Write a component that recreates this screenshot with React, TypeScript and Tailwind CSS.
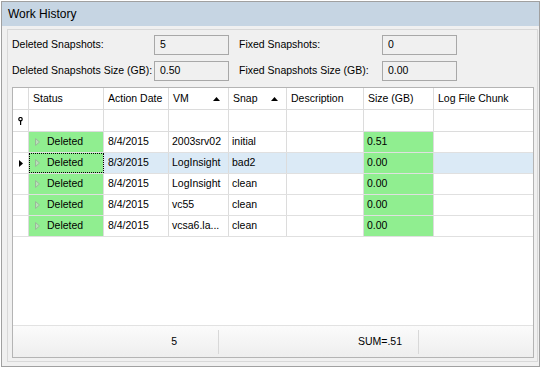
import { ReactNode } from 'react';

type Row = { date: string; vm: string; snap: string; size: string; selected?: boolean };

const rows: Row[] = [
  { date: '8/4/2015', vm: '2003srv02', snap: 'initial', size: '0.51' },
  { date: '8/3/2015', vm: 'LogInsight', snap: 'bad2', size: '0.00', selected: true },
  { date: '8/4/2015', vm: 'LogInsight', snap: 'clean', size: '0.00' },
  { date: '8/4/2015', vm: 'vc55', snap: 'clean', size: '0.00' },
  { date: '8/4/2015', vm: 'vcsa6.la...', snap: 'clean', size: '0.00' },
];

const cols = 'grid grid-cols-[16px_75px_65px_60px_58px_77px_70px_1fr]';

const SortUp = () => (
  <svg width="7" height="4" viewBox="0 0 7 4" className="shrink-0">
    <polygon points="3.5,0 7,4 0,4" fill="#000" />
  </svg>
);

const Expand = () => (
  <svg width="5" height="8" viewBox="0 0 5 8" className="shrink-0">
    <polygon points="0.5,0.5 4.5,4 0.5,7.5" fill="#b9dfb9" stroke="#9ab89a" strokeWidth="1" />
  </svg>
);

const Field = ({ label, value, labelW }: { label: string; value: string; labelW: string }) => (
  <div className="flex items-center">
    <span className={labelW}>{label}</span>
    <div className="w-[75px] h-[20px] border border-[#a8a8a8] bg-[#f0f0f0] pl-[5px] flex items-center">{value}</div>
  </div>
);

const Head = ({ children, sort }: { children?: ReactNode; sort?: boolean }) => (
  <div className="border-r border-[#dcdcdc] pl-[4px] pr-[8px] flex items-center justify-between overflow-hidden">
    <span>{children}</span>
    {sort && <SortUp />}
  </div>
);

export default function App() {
  return (
    <div className="w-[541px] h-[369px] bg-white pt-px px-px pb-[2px] font-['Liberation_Sans',Arial,sans-serif] text-[10.5px] text-black whitespace-nowrap">
      <div className="h-full border border-[#a0a0a0] bg-[#f0f0f0] flex flex-col">
        <div className="h-[24px] bg-[#c6d5e3] pl-[6px] flex items-center text-[12px]">Work History</div>
        <div className="flex-1 pt-[3px] pl-[5px] pr-[1px] pb-[4px] flex">
          <div className="flex-1 border border-[#d8d8d8] pl-[4px] pr-[3px] pt-[5px] pb-[3px] flex flex-col">
            <div className="flex flex-col gap-[6px]">
              <div className="flex gap-[10px]">
                <Field label="Deleted Snapshots:" value="5" labelW="w-[142px]" />
                <Field label="Fixed Snapshots:" value="0" labelW="w-[143px]" />
              </div>
              <div className="flex gap-[10px]">
                <Field label="Deleted Snapshots Size (GB):" value="0.50" labelW="w-[142px]" />
                <Field label="Fixed Snapshots Size (GB):" value="0.00" labelW="w-[143px]" />
              </div>
            </div>

            <div className="mt-[6px] flex-1 border border-[#b4b4b4] bg-white flex flex-col">
              {/* header */}
              <div className={`${cols} h-[22px] border-b border-[#dcdcdc]`}>
                <Head />
                <Head>Status</Head>
                <Head>Action Date</Head>
                <Head sort>VM</Head>
                <Head sort>Snap</Head>
                <Head>Description</Head>
                <Head>Size (GB)</Head>
                <div className="pl-[4px] flex items-center">Log File Chunk</div>
              </div>

              {/* filter row */}
              <div className={`${cols} h-[22px] border-b border-[#dcdcdc]`}>
                <div className="border-r border-[#dcdcdc] flex items-center justify-center">
                  <svg width="5" height="8" viewBox="0 0 5 8">
                    <circle cx="2.5" cy="2.2" r="1.7" fill="none" stroke="#000" strokeWidth="1.2" />
                    <rect x="2" y="3.5" width="1.2" height="4.5" fill="#000" />
                  </svg>
                </div>
                <div className="border-r border-[#dcdcdc]" />
                <div className="border-r border-[#dcdcdc]" />
                <div className="border-r border-[#dcdcdc]" />
                <div className="border-r border-[#dcdcdc]" />
                <div className="border-r border-[#dcdcdc]" />
                <div className="border-r border-[#dcdcdc]" />
                <div />
              </div>

              {rows.map((r, i) => (
                <div
                  key={i}
                  className={`${cols} h-[21px] border-b border-[#e0e0e0] ${r.selected ? 'bg-[#dbeaf6]' : ''}`}
                >
                  <div className="border-r border-[#dcdcdc] bg-white flex items-center justify-center">
                    {r.selected && (
                      <svg width="4" height="7" viewBox="0 0 4 7">
                        <polygon points="0,0 4,3.5 0,7" fill="#000" />
                      </svg>
                    )}
                  </div>
                  <div
                    className={`border-r border-[#dcdcdc] bg-[#90ee90] pl-[6px] flex items-center gap-[7px] ${
                      r.selected ? 'outline outline-1 outline-dotted outline-black -outline-offset-1' : ''
                    }`}
                  >
                    <Expand />
                    <span>Deleted</span>
                  </div>
                  <div className="border-r border-[#dcdcdc] pl-[4px] flex items-center">{r.date}</div>
                  <div className="border-r border-[#dcdcdc] pl-[3px] flex items-center overflow-hidden">{r.vm}</div>
                  <div className="border-r border-[#dcdcdc] pl-[3px] flex items-center">{r.snap}</div>
                  <div className="border-r border-[#dcdcdc]" />
                  <div className="border-r border-[#dcdcdc] bg-[#90ee90] pl-[3px] flex items-center">{r.size}</div>
                  <div />
                </div>
              ))}

              <div className="flex-1" />

              {/* footer */}
              <div className="h-[32px] border-t border-[#e2e2e2] bg-linear-to-b from-[#fbfbfb] to-[#eeeeee] flex items-center">
                <div className="w-[206px] h-[24px] border-r border-[#d8d8d8] flex items-center justify-end pr-[41px]">5</div>
                <div className="w-[200px] h-[24px] border-r border-[#d8d8d8] flex items-center justify-end pr-[16px]">SUM=.51</div>
              </div>
            </div>
          </div>
        </div>
      </div>
    </div>
  );
}
